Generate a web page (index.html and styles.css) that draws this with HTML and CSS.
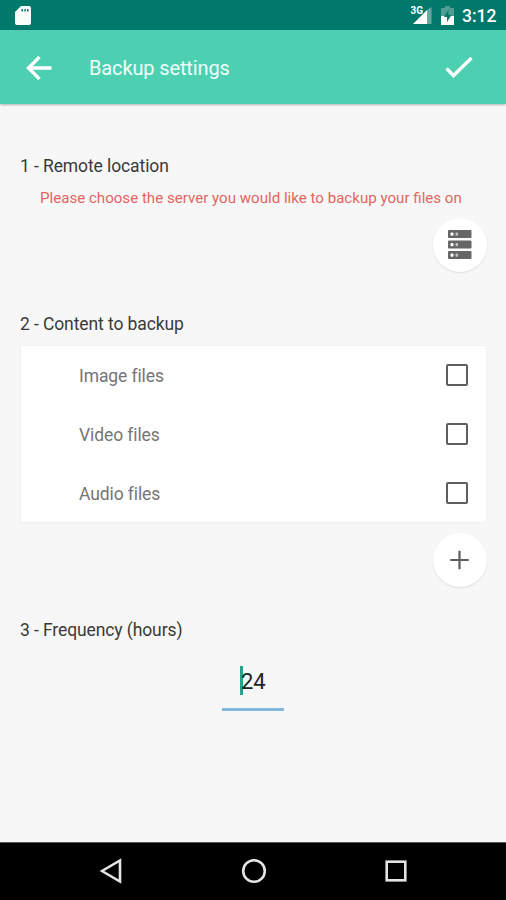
FILE: index.html
```html
<!DOCTYPE html>
<html lang="en">
<head>
<meta charset="utf-8">
<title>Backup settings</title>
<link rel="stylesheet" href="styles.css">
</head>
<body>
<div class="status">
  <svg class="sd" width="16" height="20" viewBox="0 0 16 20"><path fill="#f7fffb" fill-rule="evenodd" d="M6 0h8q2 0 2 2v15q0 2-2 2H2q-2 0-2-2V6zM6.500 3v2.500H8V3zm2.800 0v2.500h1.500V3zm2.700 0v2.500h1.500V3z"/></svg>
  <div class="status-right">
    <svg class="signal" width="22" height="22" viewBox="0 0 22 22"><path fill="#65a9a1" d="M17 6l4.500-3v17H17z"/><path fill="#fff" d="M17 6v14H3z"/><text class="net" x="0.500" y="9.500">3G</text></svg>
    <svg class="battery" width="13" height="20" viewBox="0 0 13 20"><path fill="#4f9c93" d="M4 0h5v2h4v8H0V2h4z"/><path fill="#fff" d="M0 10h13v9H0z"/><path fill="#00796b" d="M7.500 4L3 11h3v5l4.500-7h-3z"/></svg>
    <span class="clock">3:12</span>
  </div>
</div>
<header class="bar">
  <svg class="back" width="26" height="26" viewBox="0 0 26 26"><path d="M13.500 2L2.500 13l11 11M3 13h22.500"/></svg>
  <h1 class="title">Backup settings</h1>
  <svg class="check" width="28" height="24" viewBox="0 0 28 24"><path d="M1.500 12.500l7 7L26.500 2"/></svg>
</header>
<main class="content">
  <h2 class="heading h-remote">1 - Remote location</h2>
  <p class="warning">Please choose the server you would like to backup your files on</p>
  <button class="fab fab-server" aria-label="Server">
    <svg width="24" height="30" viewBox="0 0 24 30"><g fill="#666"><rect width="23.500" height="8" rx="1"/><rect y="10.500" width="23.500" height="8" rx="1"/><rect y="21" width="23.500" height="8" rx="1"/></g><g fill="#fff"><rect x="2.500" y="2.500" width="3" height="3.200" rx="1"/><rect x="2.500" y="13" width="3" height="3.200" rx="1"/><rect x="2.500" y="23.500" width="3" height="3.200" rx="1"/></g><g fill="#c4c4c4"><rect x="7.500" y="2.500" width="2.500" height="3.200" rx="1"/><rect x="7.500" y="13" width="2.500" height="3.200" rx="1"/><rect x="7.500" y="23.500" width="2.500" height="3.200" rx="1"/></g></svg>
  </button>
  <h2 class="heading h-content">2 - Content to backup</h2>
  <div class="list">
    <div class="row"><span class="label">Image files</span><span class="box"></span></div>
    <div class="row"><span class="label">Video files</span><span class="box"></span></div>
    <div class="row"><span class="label">Audio files</span><span class="box"></span></div>
  </div>
  <button class="fab fab-add" aria-label="Add">
    <svg width="20" height="20" viewBox="0 0 20 20"><path stroke="#5c5c5c" stroke-width="2.200" d="M9.500 .8v18.400M.3 10h18.400"/></svg>
  </button>
  <h2 class="heading h-freq">3 - Frequency (hours)</h2>
  <div class="field"><span class="caret"></span><span>24</span></div>
</main>
<nav class="nav">
  <svg width="22" height="26" viewBox="0 0 22 26"><path d="M20 2.500v21L2 13z"/></svg>
  <svg width="26" height="26" viewBox="0 0 26 26"><circle cx="13" cy="13" r="10.800"/></svg>
  <svg width="22" height="26" viewBox="0 0 22 26"><rect x="1.700" y="3.700" width="18.600" height="18.600"/></svg>
</nav>
</body>
</html>
```
FILE: styles.css
```css
* { box-sizing: border-box; margin: 0; padding: 0; }
body {
  width: 506px; height: 900px; overflow: hidden;
  display: flex; flex-direction: column;
  background: #f7f7f7; font-family: Roboto, "Liberation Sans", sans-serif;
}
.status {
  height: 30px; flex: none; background: #00796b;
  display: flex; justify-content: space-between; align-items: flex-start;
  padding: 6px 9px 0 15px;
}
.status-right { display: flex; align-items: flex-start; }
.signal { margin: -2px 9px 0 0; }
.net { font-size: 10px; font-weight: 700; fill: #fff; stroke: #00796b; stroke-width: 1px; paint-order: stroke; }
.battery { margin-right: 8px; }
.clock { font-size: 17.5px; font-weight: 500; line-height: 20px; color: #fff; width: 35px; white-space: nowrap; }
.bar {
  height: 74px; flex: none; background: #4dd0b1; position: relative;
  display: flex; align-items: center; padding: 2px 33px 0 26px;
  box-shadow: 0 1px 2px rgba(0, 0, 0, .28);
}
.back, .check { fill: none; stroke: #fff; stroke-width: 3.4px; }
.title { flex: 1; margin-left: 37px; font-size: 20px; letter-spacing: -.13px; font-weight: 400; line-height: 24px; color: #f1fffa; }
.content { flex: 1; display: flex; flex-direction: column; padding: 52px 20px 0; }
.heading { height: 20px; line-height: 20px; font-size: 17.5px; letter-spacing: -.1px; font-weight: 400; color: #3a3a3a; }
.warning { margin: 12px 0 0 20px; height: 20px; line-height: 20px; font-size: 15.1px; color: #e36560; white-space: nowrap; }
.fab {
  width: 54px; height: 54px; border: 0; border-radius: 50%; background: #fff;
  align-self: flex-end; margin-right: -1px;
  display: flex; align-items: center; justify-content: center;
  box-shadow: 0 1px 2px rgba(0, 0, 0, .1);
}
.fab-server { margin-top: 10px; }
.h-content { margin-top: 42px; }
.list { margin: 12px 0 0 1px; height: 176px; background: #fff; box-shadow: 0 0 1px rgba(0, 0, 0, .15); }
.row { height: 59px; display: flex; align-items: center; justify-content: space-between; padding: 0 17px 0 58px; }
.label { font-size: 17.5px; letter-spacing: -.1px; line-height: 20px; color: #757575; }
.box { width: 22px; height: 22px; margin: 0 1px 1px 0; border: 2px solid #5e5e5e; border-radius: 2px; }
.fab-add { margin-top: 11px; }
.h-freq { margin-top: 33px; }
.field {
  width: 62px; height: 50px; margin: 21px 0 0 202px;
  display: flex; align-items: flex-start; padding-left: 18px;
  border-bottom: 3px solid #83b8df;
  font-size: 22px; line-height: 42px; color: #222;
}
.caret { width: 2.5px; height: 29px; margin: 5px -1.5px 0 0; background: #24a58d; }
.nav {
  height: 58px; flex: none; background: #000; border-top: 1px solid #555;
  display: flex; align-items: center; justify-content: space-between; padding: 0 99px 2px 100px;
}
.nav svg { fill: none; stroke: #e4e4e4; stroke-width: 2.6px; }
```
